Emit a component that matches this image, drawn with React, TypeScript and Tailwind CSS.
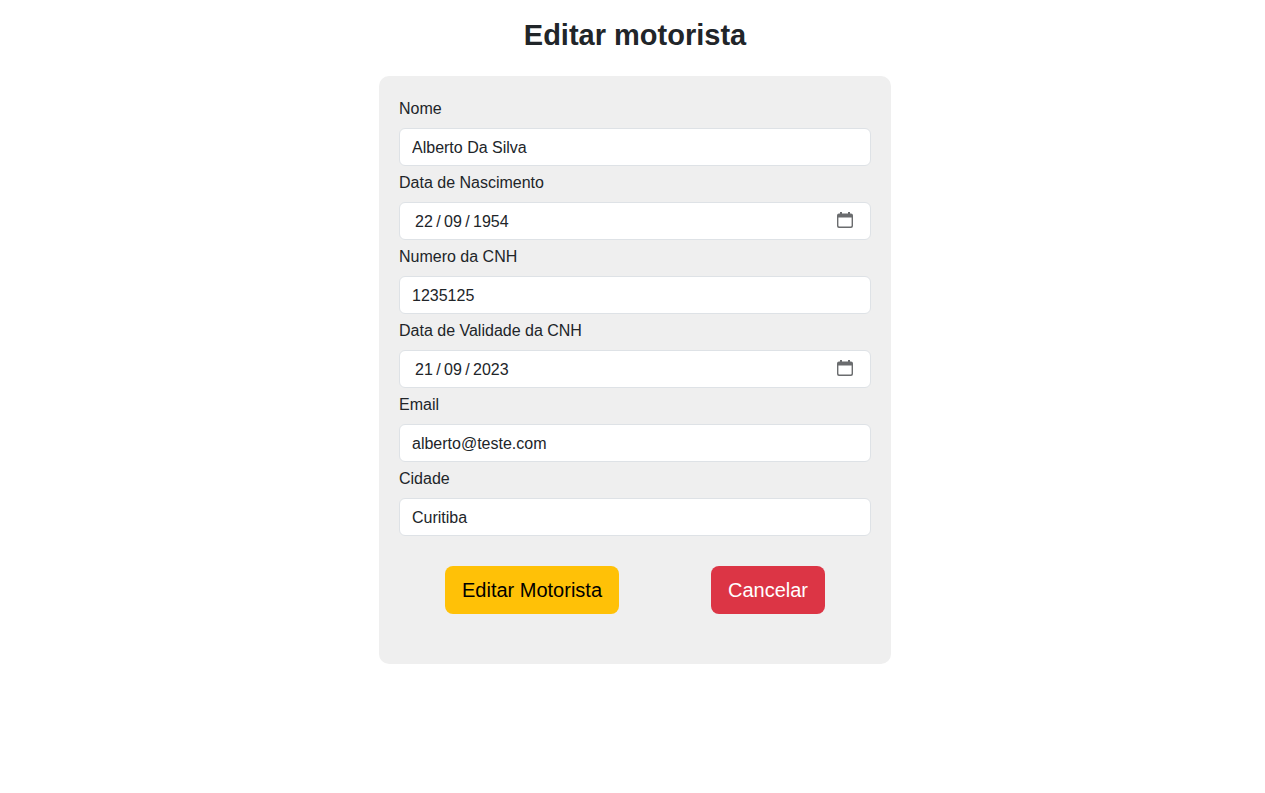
import { useState } from "react";

type Field = { id: string; label: string; type: "text" | "email"; value: string; date?: boolean };

const fields: Field[] = [
  { id: "nome", label: "Nome", type: "text", value: "Alberto Da Silva" },
  { id: "nascimento", label: "Data de Nascimento", type: "text", value: "22/09/1954", date: true },
  { id: "cnh", label: "Numero da CNH", type: "text", value: "1235125" },
  { id: "validade", label: "Data de Validade da CNH", type: "text", value: "21/09/2023", date: true },
  { id: "email", label: "Email", type: "email", value: "alberto@teste.com" },
  { id: "cidade", label: "Cidade", type: "text", value: "Curitiba" },
];

const inputClass = "min-w-0 bg-transparent outline-none";

function CalendarIcon() {
  return (
    <svg width="16" height="16" viewBox="0 0 16 16" aria-hidden="true">
      <path
        d="M3 0h2v1.500h6V0h2v1.500h1A2 2 0 0 1 16 3.500V14a2 2 0 0 1-2 2H2a2 2 0 0 1-2-2V3.500a2 2 0 0 1 2-2h1zM1.400 5.500v8.100a1 1 0 0 0 1 1h11.200a1 1 0 0 0 1-1V5.500z"
        fill="#6a6c6e"
        fillRule="evenodd"
      />
    </svg>
  );
}

function DateInput({ id, initial }: { id: string; initial: string }) {
  const [parts, setParts] = useState(initial.split("/"));
  const names = ["dia", "mês", "ano"];
  return (
    <div className="flex h-[38px] w-full items-center rounded-md border border-[#dee2e6] bg-white pl-[15px] pr-4 pt-px">
      {parts.map((part, i) => (
        <span key={i} className="flex items-center">
          {i > 0 && <span className="w-[11px] text-center">/</span>}
          <input
            id={i === 0 ? id : `${id}-${i}`}
            aria-label={i === 0 ? undefined : names[i]}
            inputMode="numeric"
            value={part}
            onChange={(e) => setParts(parts.map((p, n) => (n === i ? e.target.value : p)))}
            className={i === 2 ? `${inputClass} w-9` : `${inputClass} w-[18px]`}
          />
        </span>
      ))}
      <button type="button" aria-label="Abrir calendário" className="ml-auto pb-1 pr-px">
        <CalendarIcon />
      </button>
    </div>
  );
}

export default function App() {
  return (
    <main className="flex flex-col items-center bg-white pl-[21px] pr-4 pt-4 font-['Liberation_Sans',Arial,sans-serif] text-base leading-6 text-[#212529]">
      <h1 className="mb-[22px] text-[29px] font-bold leading-[38px]">Editar motorista</h1>
      <form
        className="w-full max-w-lg rounded-[10px] bg-[#efefef] px-5 pb-[50px] pt-4"
        onSubmit={(e) => e.preventDefault()}
      >
        {fields.map((f) => (
          <div key={f.id} className="flex flex-col">
            <label htmlFor={f.id} className="mb-[7px] self-start pt-[5px]">
              {f.label}
            </label>
            {f.date ? (
              <DateInput id={f.id} initial={f.value} />
            ) : (
              <input
                id={f.id}
                type={f.type}
                defaultValue={f.value}
                className="h-[38px] w-full rounded-md border border-[#dee2e6] bg-white px-3 pt-px outline-none"
              />
            )}
          </div>
        ))}
        <div className="mt-[30px] flex justify-around text-xl">
          <button type="submit" className="h-12 rounded-lg bg-[#ffc107] px-[17px] text-black">
            Editar Motorista
          </button>
          <button type="button" className="h-12 rounded-lg bg-[#dc3545] px-[17px] text-white">
            Cancelar
          </button>
        </div>
      </form>
    </main>
  );
}
